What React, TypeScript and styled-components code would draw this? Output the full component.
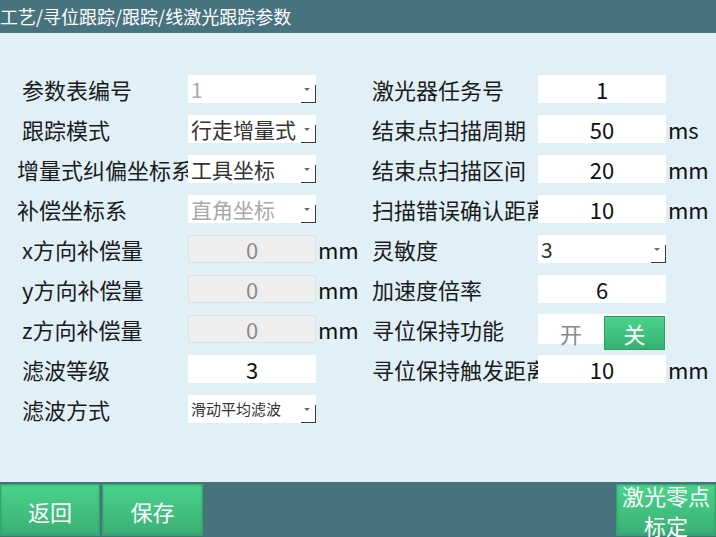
import styled, { createGlobalStyle } from "styled-components";

const GlobalStyle = createGlobalStyle`
  html, body { margin: 0; padding: 0; overflow: hidden; }
  body { font-family: "Noto Sans CJK SC", "Noto Sans", sans-serif; }
  #root { width: 716px; height: 537px; }
`;

const Page = styled.div`
  width: 716px;
  height: 537px;
  display: flex;
  flex-direction: column;
  background: #e1f0f7;
  overflow: hidden;
`;

const Header = styled.div`
  height: 33px;
  flex-shrink: 0;
  background: #47737f;
  color: #fff;
  font-size: 18px;
  line-height: 33px;
  white-space: nowrap;
`;

const Main = styled.div`
  flex: 1;
  display: flex;
  padding-top: 36px;
`;

const Column = styled.div<{ $width?: number }>`
  width: ${(p) => (p.$width ? `${p.$width}px` : "auto")};
  flex: ${(p) => (p.$width ? "none" : "1")};
  display: flex;
  flex-direction: column;
`;

const Row = styled.div<{ $label: number }>`
  height: 40px;
  display: grid;
  grid-template-columns: ${(p) => p.$label}px 128px auto;
  align-items: center;
`;

const Label = styled.div<{ $pad: number }>`
  padding-left: ${(p) => p.$pad}px;
  font-size: 22px;
  line-height: 34px;
  color: #1b1b1b;
  white-space: nowrap;
  overflow-x: clip;
  overflow-y: visible;
`;

const Input = styled.div<{ $disabled?: boolean }>`
  height: 28px;
  box-sizing: border-box;
  background: ${(p) => (p.$disabled ? "#eeeeee" : "#ffffff")};
  border: 1px solid ${(p) => (p.$disabled ? "#d8e4ea" : "#ffffff")};
  color: ${(p) => (p.$disabled ? "#8a8a8a" : "#111111")};
  font-size: 22px;
  line-height: 26px;
  text-align: center;
`;

const Select = styled.div<{ $disabled?: boolean; $size?: number }>`
  height: 28px;
  display: flex;
  background: #fff;
  color: ${(p) => (p.$disabled ? "#a8a8a8" : "#333333")};
  font-size: ${(p) => p.$size ?? 21}px;
  line-height: 28px;
`;

const SelectText = styled.span`
  flex: 1;
  padding-left: 3px;
  white-space: nowrap;
  overflow-x: clip;
`;

const ArrowBtn = styled.div`
  align-self: flex-end;
  width: 15px;
  height: 18px;
  box-sizing: border-box;
  border-right: 1px solid #3a3a3a;
  border-bottom: 1px solid #3a3a3a;
  display: flex;
  justify-content: center;
  padding-top: 3px;
  padding-right: 2px;
`;

const Arrow = styled.div`
  width: 0;
  height: 0;
  border-left: 3px solid transparent;
  border-right: 3px solid transparent;
  border-top: 3px solid #6a6a6a;
`;

const Unit = styled.span<{ $gap: number }>`
  padding-left: ${(p) => p.$gap}px;
  font-size: 22px;
  line-height: 28px;
  color: #111;
`;

const Toggle = styled.div`
  height: 30px;
  box-sizing: border-box;
  padding: 2px 1px 0 0;
  background: #fff;
  display: grid;
  grid-template-columns: 1fr 61px;
  font-size: 22px;
`;

const ToggleOpt = styled.div<{ $on?: boolean }>`
  display: flex;
  align-items: center;
  justify-content: center;
  color: ${(p) => (p.$on ? "#fff" : "#8a8a8a")};
  background: ${(p) => (p.$on ? "linear-gradient(#4bd28d, #37b171)" : "transparent")};
  border: 1px solid ${(p) => (p.$on ? "#2f9f63" : "transparent")};
`;

const Footer = styled.div`
  height: 55px;
  flex-shrink: 0;
  background: #47737f;
  display: flex;
  align-items: flex-start;
  gap: 2px;
  padding-top: 2px;
  box-sizing: border-box;
`;

const FootBtn = styled.div<{ $width: number; $right?: boolean }>`
  width: ${(p) => p.$width}px;
  height: 52px;
  margin-left: ${(p) => (p.$right ? "auto" : "0")};
  box-sizing: border-box;
  background: linear-gradient(#49d48c, #3aaf73);
  border: 1px solid #36a36a;
  box-shadow: inset 0 0 2px rgba(0, 80, 40, 0.35);
  color: #fff;
  font-size: 22px;
  line-height: 30px;
  text-align: center;
  display: flex;
  align-items: center;
  justify-content: center;
  padding-top: ${(p) => (p.$right ? 0 : 2)}px;
`;

const Combo = ({ text, disabled, size }: { text: string; disabled?: boolean; size?: number }) => (
  <Select $disabled={disabled} $size={size}>
    <SelectText>{text}</SelectText>
    <ArrowBtn>
      <Arrow />
    </ArrowBtn>
  </Select>
);

export default function App() {
  return (
    <Page>
      <GlobalStyle />
      <Header>工艺/寻位跟踪/跟踪/线激光跟踪参数</Header>
      <Main>
        <Column $width={360}>
          <Row $label={188}>
            <Label $pad={22}>参数表编号</Label>
            <Combo text="1" disabled />
          </Row>
          <Row $label={188}>
            <Label $pad={22}>跟踪模式</Label>
            <Combo text="行走增量式" />
          </Row>
          <Row $label={188}>
            <Label $pad={17}>增量式纠偏坐标系</Label>
            <Combo text="工具坐标" />
          </Row>
          <Row $label={188}>
            <Label $pad={17}>补偿坐标系</Label>
            <Combo text="直角坐标" disabled />
          </Row>
          <Row $label={188}>
            <Label $pad={22}>x方向补偿量</Label>
            <Input $disabled>0</Input>
            <Unit $gap={2}>mm</Unit>
          </Row>
          <Row $label={188}>
            <Label $pad={22}>y方向补偿量</Label>
            <Input $disabled>0</Input>
            <Unit $gap={2}>mm</Unit>
          </Row>
          <Row $label={188}>
            <Label $pad={22}>z方向补偿量</Label>
            <Input $disabled>0</Input>
            <Unit $gap={2}>mm</Unit>
          </Row>
          <Row $label={188}>
            <Label $pad={22}>滤波等级</Label>
            <Input>3</Input>
          </Row>
          <Row $label={188}>
            <Label $pad={22}>滤波方式</Label>
            <Combo text="滑动平均滤波" size={15} />
          </Row>
        </Column>
        <Column>
          <Row $label={178}>
            <Label $pad={12}>激光器任务号</Label>
            <Input>1</Input>
          </Row>
          <Row $label={178}>
            <Label $pad={12}>结束点扫描周期</Label>
            <Input>50</Input>
            <Unit $gap={2}>ms</Unit>
          </Row>
          <Row $label={178}>
            <Label $pad={12}>结束点扫描区间</Label>
            <Input>20</Input>
            <Unit $gap={2}>mm</Unit>
          </Row>
          <Row $label={178}>
            <Label $pad={12}>扫描错误确认距离</Label>
            <Input>10</Input>
            <Unit $gap={2}>mm</Unit>
          </Row>
          <Row $label={178}>
            <Label $pad={12}>灵敏度</Label>
            <Combo text="3" />
          </Row>
          <Row $label={178}>
            <Label $pad={12}>加速度倍率</Label>
            <Input>6</Input>
          </Row>
          <Row $label={178}>
            <Label $pad={12}>寻位保持功能</Label>
            <Toggle>
              <ToggleOpt>开</ToggleOpt>
              <ToggleOpt $on>关</ToggleOpt>
            </Toggle>
          </Row>
          <Row $label={178}>
            <Label $pad={12}>寻位保持触发距离</Label>
            <Input>10</Input>
            <Unit $gap={2}>mm</Unit>
          </Row>
        </Column>
      </Main>
      <Footer>
        <FootBtn $width={100}>返回</FootBtn>
        <FootBtn $width={101}>保存</FootBtn>
        <FootBtn $width={100} $right>
          激光零点
          <br />
          标定
        </FootBtn>
      </Footer>
    </Page>
  );
}
